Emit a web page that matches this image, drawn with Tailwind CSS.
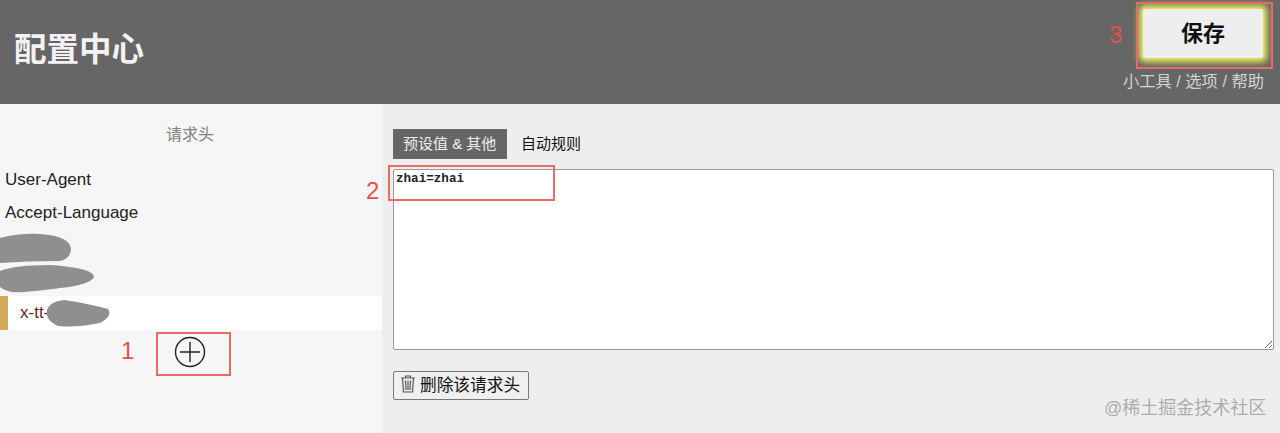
<!DOCTYPE html>
<html lang="zh">
<head>
<meta charset="UTF-8">
<title>配置中心</title>
<script src="https://cdn.jsdelivr.net/npm/@tailwindcss/browser@4"></script>
</head>
<body class="bg-[#eeeeee] font-['Liberation_Sans','Noto_Sans_CJK_SC',sans-serif] overflow-hidden">
<div class="relative w-[1280px] h-[433px] overflow-hidden">
    <header class="h-[104px] bg-[#666666] flex justify-between pl-[14px] pr-4">
        <h1 class="text-[32.500px] leading-none font-bold text-[#f2f2f2] mt-[34px]">配置中心</h1>
        <div class="flex flex-col items-end">
            <button class="w-[120px] h-[49px] mt-[9px] mb-[1px] mr-[1px] bg-[#eeeeee] rounded-[2px] text-[22px] leading-none font-bold text-[#111] shadow-[0_0_6px_4px_#eef060]">保存</button>
            <div class="mt-[12px] text-[16.3px] leading-[20px] text-[#d4d4d4]">小工具 / 选项 / 帮助</div>
        </div>
    </header>
    <div class="flex h-[329px]">
        <aside class="w-[382px] bg-[#f6f6f6]">
            <div class="pt-[22px] text-center text-[16px] leading-[18px] text-[#808080] pr-[2px]">请求头</div>
            <ul class="mt-[19px] text-[#222] text-[17px]">
                <li class="h-[33px] leading-[33px] pl-[5px]">User-Agent</li>
                <li class="h-[33px] leading-[33px] pl-[5px]">Accept-Language</li>
                <li class="h-[33px]"></li>
                <li class="h-[34px]"></li>
                <li class="h-[34px] leading-[34px] bg-white border-l-[8px] border-[#d3a95a] pl-[12px] text-[#6b1f2a]">x-tt-</li>
            </ul>
            <div class="flex justify-center mt-[6px] pr-[2px]">
                <svg class="w-[32px] h-[32px]" viewBox="0 0 32 32" fill="none" stroke="#222" stroke-width="1.4"><circle cx="16" cy="16" r="14.500"/><path d="M16 6v20M6 16h20"/></svg>
            </div>
        </aside>
        <main class="flex-1 pl-[11px] pr-[6px]">
            <div class="flex mt-[25px] text-[15px] leading-[30px]">
                <div class="h-[30px] px-[10px] w-[114px] bg-[#666666] text-[#eeeeee] whitespace-nowrap">预设值 &amp; 其他</div>
                <div class="h-[30px] px-[14px] text-[#111]">自动规则</div>
            </div>
            <textarea class="block mt-[10px] w-[881px] h-[181px] bg-white border border-[#999] rounded-[2px] px-[2px] py-[2px] font-['Liberation_Mono',monospace] text-[12.6px] leading-[15px] font-bold text-[#222]">zhai=zhai</textarea>
            <button class="flex items-center mt-[21px] h-[29px] w-[136px] pl-[6px] bg-[#efefef] border border-[#777] rounded-[2px] text-[16.7px] text-[#111]">
                <svg class="w-[16px] h-[19px] mr-[4px] mb-[4px]" viewBox="0 0 16 19" fill="none" stroke="#555" stroke-width="1.2"><path d="M1 4h14M5.500 4V2h5v2M2.500 4l1 14h9l1-14M5.500 6.500l.5 9.500M8 6.500V16M10.500 6.500L10 16"/></svg>
                <span>删除该请求头</span>
            </button>
        </main>
    </div>

    <svg class="absolute left-0 top-0 pointer-events-none" width="382" height="433" fill="#8f8f8f">
        <path d="M0 238Q20 233 40 234Q71 236 71 250Q70 259 60 261Q25 261 0 263Z"/>
        <path d="M0 271Q15 265 50 265Q94 268 94 277Q90 285 60 288Q25 293 12 292Q3 290 0 287Z"/>
        <path d="M47 310Q50 301 65 300Q90 304 108 309Q113 316 100 323Q75 328 58 326Q45 320 47 310Z"/>
    </svg>

    <div class="absolute left-[156px] top-[332px] w-[75px] h-[44px] border-2 border-[#ea6a64]"></div>
    <div class="absolute left-[388px] top-[165px] w-[167px] h-[36px] border-2 border-[#ea6a64]"></div>
    <div class="absolute left-[1136px] top-[2px] w-[137px] h-[67px] border-2 border-[#ea6a64]"></div>
    <span class="absolute left-[121px] top-[337px] text-[24px] leading-[28px] text-[#e6504a]">1</span>
    <span class="absolute left-[366px] top-[177px] text-[24px] leading-[28px] text-[#e6504a]">2</span>
    <span class="absolute left-[1109px] top-[21px] text-[24px] leading-[28px] text-[#e6504a]">3</span>
    <span class="absolute left-[1104px] top-[396px] text-[18px] leading-[24px] text-[#9a9a9a]/80">@稀土掘金技术社区</span>
</div>
</body>
</html>
